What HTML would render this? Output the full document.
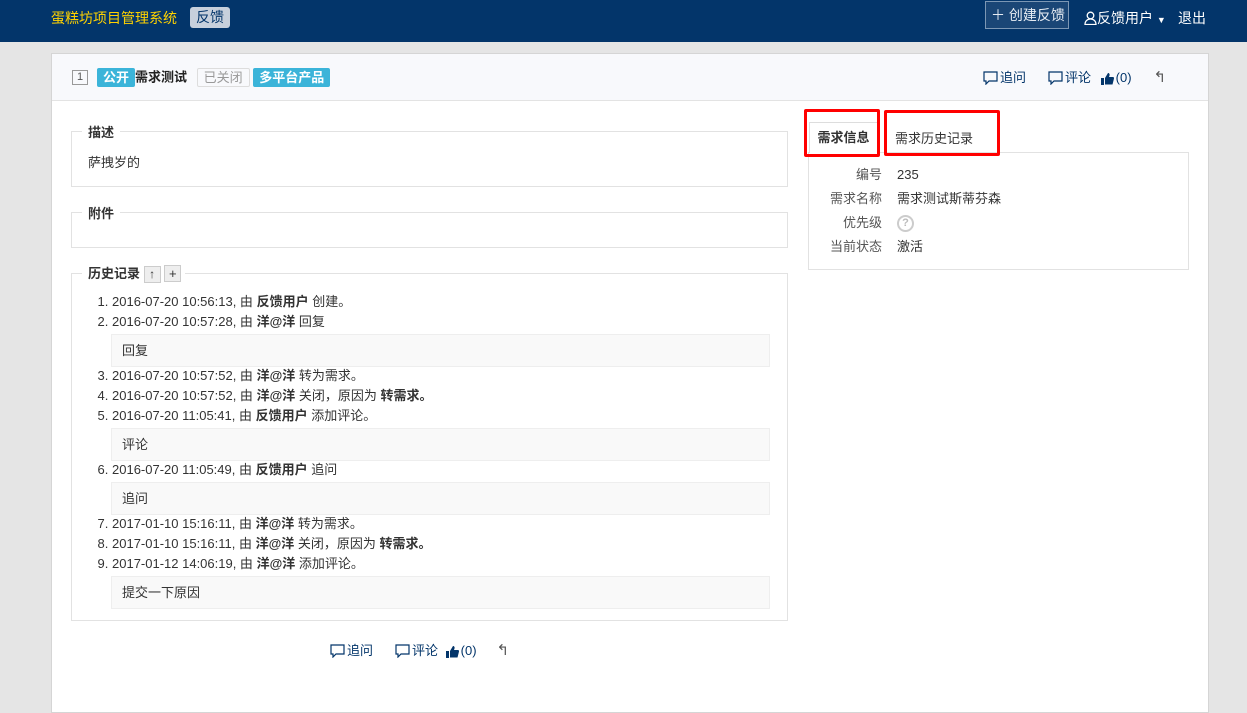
<!DOCTYPE html>
<html><head><meta charset="utf-8"><style>
*{box-sizing:border-box;margin:0;padding:0}
body{width:1247px;height:684px;overflow:hidden;background:#e5e5e5;font-family:"Liberation Sans","Noto Sans CJK SC",sans-serif;font-size:13px;color:#333;position:relative}
.a{position:absolute}
#hd{left:0;top:0;width:1247px;height:42px;background:#03356a}
#card{left:51px;top:53px;width:1158px;height:660px;background:#fff;border:1px solid #d5d5d5}
#ch{left:0;top:0;width:1156px;height:47px;background:#f8f9fc;border-bottom:1px solid #e3e3e3}
.fs{border:1px solid #e2e2e2}
.lg{background:#fff;padding:0 6px;font-weight:bold;color:#333;font-size:13px}
.tag{display:inline-block;font-size:13px;padding:0 6px;height:19px;line-height:19px;border-radius:2px;vertical-align:middle}
ol{list-style:decimal;padding-left:41px;line-height:20px;font-size:13px;color:#333}
.cm{margin:2px 0 -1px -1px;width:659px;height:33px;background:#f9f9f9;border:1px solid #eee;padding:0 10px;line-height:31px}
b{font-weight:bold}
.act{white-space:nowrap;font-size:13px;color:#03356a}
.act svg{vertical-align:-3px;margin-right:2px}
</style></head><body>
<div class="a" id="hd">
 <div class="a" style="left:51px;top:8px;color:#ffd200;font-size:14px">蛋糕坊项目管理系统</div>
 <div class="a" style="left:190px;top:7px;background:#c7d0dc;color:#03356a;border-radius:3px;padding:0 6px;height:21px;line-height:21px;font-size:14px">反馈</div>
 <div class="a" style="left:985px;top:1px;width:84px;height:28px;border:1px solid #7c97b4;background:#1a4676;color:#e6ecf3;font-size:14px;line-height:26px;padding-left:5px">＋ 创建反馈</div>
 <div class="a" style="left:1084px;top:8px;color:#fff;font-size:14px;white-space:nowrap"><svg width="13" height="14" viewBox="0 0 13 14" style="vertical-align:-2px"><circle cx="6.5" cy="4.5" r="3.3" fill="none" stroke="#fff" stroke-width="1.3"/><path d="M1 13.5c0-3.5 2.5-5.5 5.5-5.5s5.5 2 5.5 5.5z" fill="none" stroke="#fff" stroke-width="1.3"/></svg>反馈用户 <span style="font-size:9px">▼</span></div>
 <div class="a" style="left:1178px;top:8px;color:#fff;font-size:14px">退出</div>
</div>
<div class="a" id="card">
 <div class="a" id="ch">
  <div class="a" style="left:20px;top:16px;width:16px;height:15px;border:1px solid #999;font-size:11px;text-align:center;line-height:13px;color:#555">1</div>
  <div class="a" style="left:45px;top:13px;height:20px;line-height:20px;white-space:nowrap">
   <span class="tag" style="background:#3bb4d9;color:#fff;font-weight:bold">公开</span><b style="color:#222;vertical-align:middle">需求测试</b>
   <span class="tag" style="border:1px solid #ddd;color:#999;margin-left:6px;line-height:17px">已关闭</span>
   <span class="tag" style="background:#3bb4d9;color:#fff;font-weight:bold">多平台产品</span>
  </div>
  <div class="a act" style="left:931px;top:13px">
   <svg width="15" height="14" viewBox="0 0 15 14"><path d="M1 1h13v9H6l-3 3v-3H1z" fill="none" stroke="#03356a" stroke-width="1.2"/></svg>追问<span style="margin-left:22px"></span><svg width="15" height="14" viewBox="0 0 15 14"><path d="M1 1h13v9H6l-3 3v-3H1z" fill="none" stroke="#03356a" stroke-width="1.2"/></svg>评论 <span style="margin-left:6px"></span><svg width="13" height="13" viewBox="0 0 13 13"><path d="M0 6h3v7H0zM4 6l3-5c1 0 2 1 1.5 2.5L8 5h4c1 0 1 1 1 1.5l-1.5 6H4z" fill="#03356a"/></svg>(0)<span style="margin-left:22px;color:#555;font-size:15px">↰</span>
  </div>
 </div>
 <div class="a fs" style="left:19px;top:77px;width:717px;height:56px"></div>
 <div class="a lg" style="left:30px;top:68px">描述</div>
 <div class="a" style="left:36px;top:98px">萨拽岁的</div>
 <div class="a fs" style="left:19px;top:158px;width:717px;height:36px"></div>
 <div class="a lg" style="left:30px;top:149px">附件</div>
 <div class="a fs" style="left:19px;top:219px;width:717px;height:348px"></div>
 <div class="a lg" style="left:30px;top:209px;padding-right:4px">历史记录 <span style="display:inline-block;width:17px;height:17px;border:1px solid #ccc;background:#eee;font-weight:normal;text-align:center;line-height:15px;font-size:12px">↑</span> <span style="display:inline-block;width:17px;height:17px;border:1px solid #ccc;background:#eee;font-weight:normal;text-align:center;line-height:15px;font-size:13px">+</span></div>
 <div class="a" style="left:19px;top:238px;width:717px">
 <ol start="1">
  <li>2016-07-20 10:56:13, 由 <b>反馈用户</b> 创建。</li>
  <li>2016-07-20 10:57:28, 由 <b>洋@洋</b> 回复<div class="cm">回复</div></li>
  <li>2016-07-20 10:57:52, 由 <b>洋@洋</b> 转为需求。</li>
  <li>2016-07-20 10:57:52, 由 <b>洋@洋</b> 关闭，原因为 <b>转需求。</b></li>
  <li>2016-07-20 11:05:41, 由 <b>反馈用户</b> 添加评论。<div class="cm">评论</div></li>
  <li>2016-07-20 11:05:49, 由 <b>反馈用户</b> 追问<div class="cm">追问</div></li>
  <li>2017-01-10 15:16:11, 由 <b>洋@洋</b> 转为需求。</li>
  <li>2017-01-10 15:16:11, 由 <b>洋@洋</b> 关闭，原因为 <b>转需求。</b></li>
  <li>2017-01-12 14:06:19, 由 <b>洋@洋</b> 添加评论。<div class="cm">提交一下原因</div></li>
 </ol></div>
 <div class="a act" style="left:278px;top:586px">
   <svg width="15" height="14" viewBox="0 0 15 14"><path d="M1 1h13v9H6l-3 3v-3H1z" fill="none" stroke="#03356a" stroke-width="1.2"/></svg>追问<span style="margin-left:22px"></span><svg width="15" height="14" viewBox="0 0 15 14"><path d="M1 1h13v9H6l-3 3v-3H1z" fill="none" stroke="#03356a" stroke-width="1.2"/></svg>评论 <span style="margin-left:4px"></span><svg width="13" height="13" viewBox="0 0 13 13"><path d="M0 6h3v7H0zM4 6l3-5c1 0 2 1 1.5 2.5L8 5h4c1 0 1 1 1 1.5l-1.5 6H4z" fill="#03356a"/></svg>(0)<span style="margin-left:20px;color:#555;font-size:15px">↰</span>
 </div>
 <div class="a fs" style="left:756px;top:98px;width:381px;height:118px"></div>
 <div class="a" style="left:757px;top:68px;width:69px;height:31px;background:#fff;border:1px solid #ddd;border-bottom:none;text-align:center;line-height:30px;font-weight:bold">需求信息</div>
 <div class="a" style="left:843px;top:74px">需求历史记录</div>
 <div class="a" style="left:752px;top:55px;width:76px;height:48px;border:3px solid #f00;border-radius:2px"></div>
 <div class="a" style="left:832px;top:56px;width:116px;height:46px;border:3px solid #f00;border-radius:2px"></div>
 <div class="a" style="left:760px;top:109px;width:70px;text-align:right;line-height:24px;color:#555">编号<br>需求名称<br>优先级<br>当前状态</div>
 <div class="a" style="left:845px;top:109px;line-height:24px">235<br>需求测试斯蒂芬森<br><span style="display:inline-block;width:17px;height:17px;border:2px solid #ccc;border-radius:50%;color:#bbb;font-size:11px;text-align:center;line-height:13px;font-weight:bold;vertical-align:middle">?</span><br>激活</div>
</div>
</body></html>
